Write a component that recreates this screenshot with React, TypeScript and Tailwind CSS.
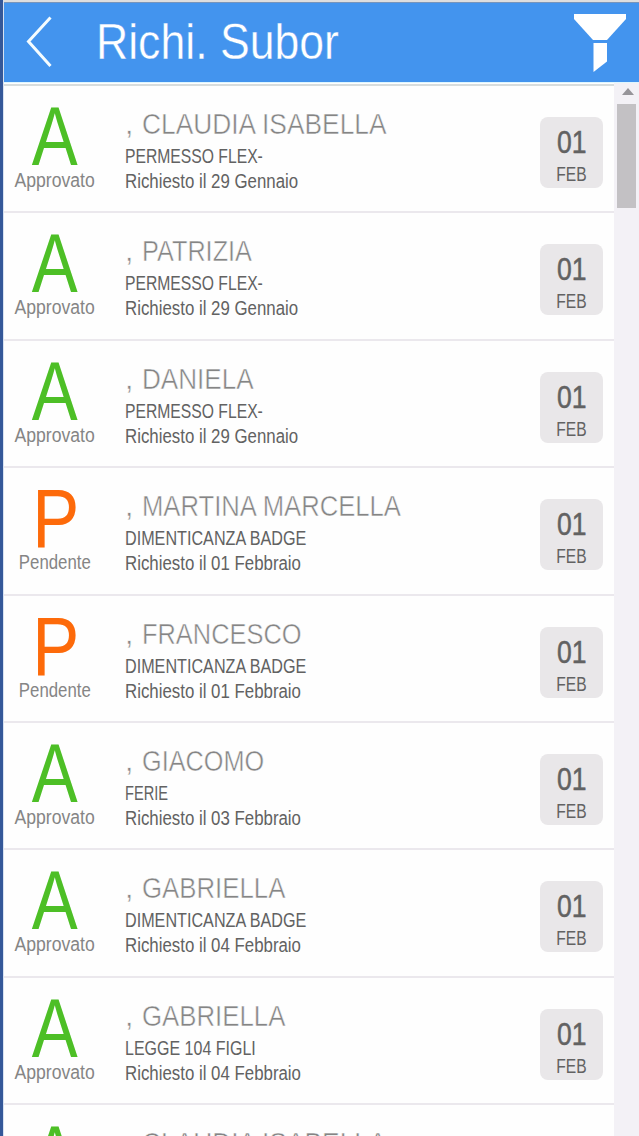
import React from "react";

type Status = "A" | "P";

interface LeaveRequest {
  status: Status;
  name: string;
  nameFit: string;
  type: string;
  typeFit: string;
  requested: string;
}

const requests: LeaveRequest[] = [
  { status: "A", name: "CLAUDIA ISABELLA", nameFit: "scale-x-[0.878]", type: "PERMESSO FLEX-", typeFit: "scale-x-[0.785]", requested: "29 Gennaio" },
  { status: "A", name: "PATRIZIA", nameFit: "scale-x-[0.842]", type: "PERMESSO FLEX-", typeFit: "scale-x-[0.785]", requested: "29 Gennaio" },
  { status: "A", name: "DANIELA", nameFit: "scale-x-[0.87]", type: "PERMESSO FLEX-", typeFit: "scale-x-[0.785]", requested: "29 Gennaio" },
  { status: "P", name: "MARTINA MARCELLA", nameFit: "scale-x-[0.855]", type: "DIMENTICANZA BADGE", typeFit: "scale-x-[0.808]", requested: "01 Febbraio" },
  { status: "P", name: "FRANCESCO", nameFit: "scale-x-[0.847]", type: "DIMENTICANZA BADGE", typeFit: "scale-x-[0.808]", requested: "01 Febbraio" },
  { status: "A", name: "GIACOMO", nameFit: "scale-x-[0.842]", type: "FERIE", typeFit: "scale-x-[0.73]", requested: "03 Febbraio" },
  { status: "A", name: "GABRIELLA", nameFit: "scale-x-[0.86]", type: "DIMENTICANZA BADGE", typeFit: "scale-x-[0.808]", requested: "04 Febbraio" },
  { status: "A", name: "GABRIELLA", nameFit: "scale-x-[0.86]", type: "LEGGE 104 FIGLI", typeFit: "scale-x-[0.8]", requested: "04 Febbraio" },
  { status: "A", name: "CLAUDIA ISABELLA", nameFit: "scale-x-[0.878]", type: "FERIE", typeFit: "scale-x-[0.73]", requested: "04 Febbraio" },
];

function Header() {
  return (
    <header className="flex h-[80px] shrink-0 items-start border-t border-[#7895bb] bg-[#4394ee] text-white">
      <button className="mt-[13px] ml-[22px] h-[52px] w-[28px]" aria-label="Indietro">
        <svg width="28" height="52" viewBox="0 0 28 52" fill="none" stroke="#f4fcff" strokeWidth="3">
          <path d="M24.500 1.500L2.500 25.500L24.500 50" />
        </svg>
      </button>
      <h1 className="ml-[42px] origin-left scale-x-[0.892] text-[50px] leading-[79px] whitespace-nowrap [-webkit-text-stroke:0.4px_#4394ee]">
        Richi. Subor
      </h1>
      <button className="mt-[11px] mr-[13px] ml-auto h-[60px] w-[52px]" aria-label="Filtro">
        <svg width="52" height="60" viewBox="0 0 52 60" fill="white">
          <path d="M0 0H52V5L33 26H19L0 5Z" />
          <path d="M19.500 29H33V47.500L19.500 58Z" />
        </svg>
      </button>
    </header>
  );
}

function StatusBadge({ status }: { status: Status }) {
  const approved = status === "A";
  return (
    <div className="flex w-[101px] shrink-0 flex-col items-center whitespace-nowrap">
      <span
        className={
          approved
            ? "mt-[14px] h-[68px] scale-x-[0.83] text-[83px] leading-[74px] text-[#4dbf26]"
            : "mt-[14px] ml-[2px] h-[68px] scale-x-[0.85] text-[83px] leading-[74px] text-[#fd6a0a]"
        }
      >
        {status}
      </span>
      <span className={approved ? "scale-x-[0.88] text-[20px] leading-[24px] text-[#858585]" : "scale-x-[0.84] text-[20px] leading-[24px] text-[#858585]"}>
        {approved ? "Approvato" : "Pendente"}
      </span>
    </div>
  );
}

function DateBadge() {
  return (
    <div className="mt-[31px] mr-[11px] ml-auto flex h-[71px] w-[63px] shrink-0 flex-col items-center rounded-lg bg-[#e9e7e9] text-[#626262]">
      <span className="mt-[8px] scale-x-[0.83] text-[32px] leading-[34px] [-webkit-text-stroke:0.5px_#626262]">01</span>
      <span className="mt-[3px] scale-x-[0.78] text-[20px] leading-[24px]">FEB</span>
    </div>
  );
}

function RequestRow({ item }: { item: LeaveRequest }) {
  return (
    <li className="flex h-[127.4px] shrink-0 border-b-2 border-[#ebe8ed]">
      <StatusBadge status={item.status} />
      <div className="ml-[20px] flex flex-col items-start whitespace-nowrap text-[#626262]">
        <div className="mt-[20px] flex text-[30px] leading-[36px] text-[#858585] [-webkit-text-stroke:0.5px_white]">
          <span className="w-[17px]">,</span>
          <span className={`origin-left ${item.nameFit}`}>{item.name}</span>
        </div>
        <span className={`mt-[2px] origin-left text-[20px] leading-[25px] ${item.typeFit}`}>{item.type}</span>
        <span className="origin-left scale-x-[0.842] text-[20px] leading-[25px]">Richiesto il {item.requested}</span>
      </div>
      <DateBadge />
    </li>
  );
}

function Scrollbar() {
  return (
    <div className="flex w-[25px] shrink-0 flex-col items-center bg-[#f3f1f6]">
      <svg className="mt-[5px] ml-[2px]" width="12" height="7" viewBox="0 0 12 7" fill="#969499">
        <path d="M6 0L12 7H0Z" />
      </svg>
      <div className="mt-[9px] h-[104px] w-[19px] bg-[#c3c1c4]" />
    </div>
  );
}

export default function App() {
  return (
    <div className="flex h-[1136px] w-[639px] overflow-hidden border-l-3 border-[#355899] bg-white font-['Liberation_Sans',Arial,sans-serif]">
      <div className="flex min-w-0 flex-1 flex-col border-l border-[#d8e2f1]">
        <div className="h-[2px] shrink-0 bg-[#dedede]" />
        <Header />
        <div className="h-px shrink-0 bg-[#dff7ff]" />
        <div className="flex min-h-0 flex-1">
          <ul className="flex min-w-0 flex-1 flex-col overflow-hidden bg-[#fefefe]">
            <li className="mt-px h-[2px] shrink-0 bg-[#d8dddd]" />
            {requests.map((item, index) => (
              <RequestRow key={index} item={item} />
            ))}
          </ul>
          <Scrollbar />
        </div>
      </div>
    </div>
  );
}
